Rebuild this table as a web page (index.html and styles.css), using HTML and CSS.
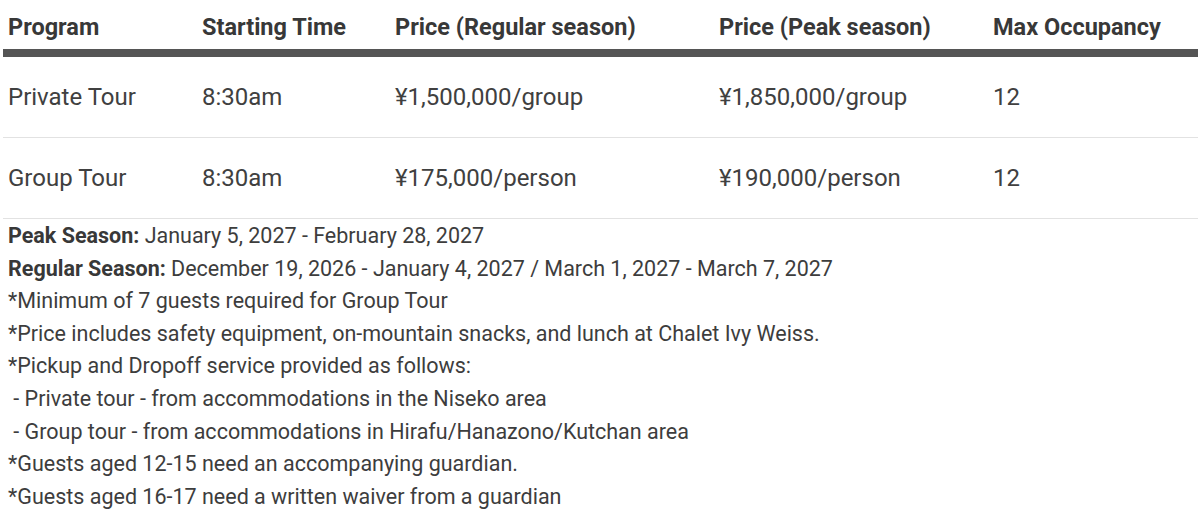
FILE: index.html
```html
<!DOCTYPE html>
<html lang="en">
<head>
<meta charset="utf-8">
<title>Tour Prices</title>
<link rel="stylesheet" href="styles.css">
</head>
<body>
<div class="page">
  <table class="prices">
    <colgroup>
      <col class="c1"><col class="c2"><col class="c3"><col class="c4"><col class="c5">
    </colgroup>
    <thead>
      <tr>
        <th>Program</th>
        <th>Starting Time</th>
        <th>Price (Regular season)</th>
        <th>Price (Peak season)</th>
        <th>Max Occupancy</th>
      </tr>
    </thead>
    <tbody>
      <tr>
        <td>Private Tour</td>
        <td>8:30am</td>
        <td>¥1,500,000/group</td>
        <td>¥1,850,000/group</td>
        <td>12</td>
      </tr>
      <tr>
        <td>Group Tour</td>
        <td>8:30am</td>
        <td>¥175,000/person</td>
        <td>¥190,000/person</td>
        <td>12</td>
      </tr>
    </tbody>
  </table>
  <div class="notes">
    <p><strong>Peak Season:</strong> January 5, 2027 - February 28, 2027</p>
    <p><strong>Regular Season:</strong> December 19, 2026 - January 4, 2027 / March 1, 2027 - March 7, 2027</p>
    <p>*Minimum of 7 guests required for Group Tour</p>
    <p>*Price includes safety equipment, on-mountain snacks, and lunch at Chalet Ivy Weiss.</p>
    <p>*Pickup and Dropoff service provided as follows:</p>
    <p>&nbsp;- Private tour - from accommodations in the Niseko area</p>
    <p>&nbsp;- Group tour - from accommodations in Hirafu/Hanazono/Kutchan area</p>
    <p>*Guests aged 12-15 need an accompanying guardian.</p>
    <p>*Guests aged 16-17 need a written waiver from a guardian</p>
  </div>
</div>
</body>
</html>
```

FILE: styles.css
```css
html, body {
  margin: 0;
  padding: 0;
  background: #ffffff;
}

.page {
  padding: 3px 2px 0 3px;
  font-family: Roboto, "Liberation Sans", sans-serif;
  color: #3d3d3d;
}

.prices {
  width: 1195px;
  border-collapse: collapse;
  table-layout: fixed;
}

.c1 { width: 194px; }
.c2 { width: 193px; }
.c3 { width: 324px; }
.c4 { width: 274px; }
.c5 { width: 210px; }

.prices th {
  height: 44px;
  padding: 2px 5px 0;
  text-align: left;
  vertical-align: middle;
  font-size: 23.5px;
  font-weight: 700;
  color: #383838;
  border-bottom: 8px solid #555555;
  white-space: nowrap;
}

.prices td {
  height: 80px;
  padding: 0 5px;
  text-align: left;
  vertical-align: middle;
  font-size: 24px;
  font-weight: 400;
  color: #404040;
  border-bottom: 1px solid #e2e2e2;
  white-space: nowrap;
}

.notes {
  padding-left: 5px;
  padding-top: 1px;
  font-size: 21.5px;
  line-height: 32.6px;
  color: #3d3d3d;
}

.notes p {
  margin: 0;
  white-space: pre;
}

.notes strong {
  font-weight: 700;
  color: #383838;
}
```
